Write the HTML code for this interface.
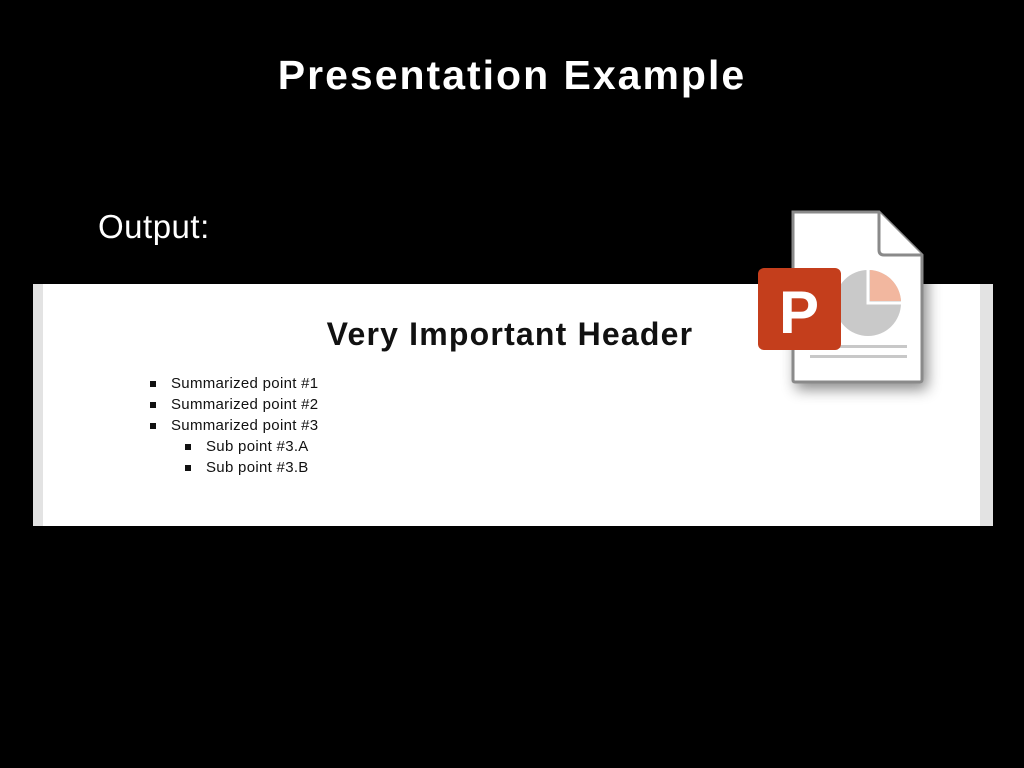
<!DOCTYPE html>
<html><head><meta charset="utf-8"><style>
html,body{margin:0;padding:0;background:#000;width:1024px;height:768px;overflow:hidden;position:relative;font-family:"Liberation Sans",sans-serif}
.t{position:absolute;top:52px;left:0;width:1024px;text-align:center;color:#fff;font-size:41px;font-weight:bold;letter-spacing:2px}
.o{position:absolute;left:98px;top:208px;color:#fff;font-size:33px;font-weight:300;letter-spacing:0.5px}
.panel{position:absolute;left:33px;top:284px;width:960px;height:242px;background:#fff}
.sl{position:absolute;left:0;top:0;width:10px;height:242px;background:#e3e3e3}
.sr{position:absolute;right:0;top:0;width:13px;height:242px;background:#e3e3e3}
.h{position:absolute;left:0;width:954px;top:32px;text-align:center;font-size:32px;font-weight:bold;color:#111;letter-spacing:1.2px}
ul{position:absolute;margin:0;padding:0;list-style:none;font-size:15px;color:#111;line-height:21px;letter-spacing:0.3px}
li{position:relative;padding-left:21px}
li:before{content:"";position:absolute;left:0;top:8px;width:6px;height:6px;background:#111}
</style></head><body>
<div class="t">Presentation Example</div>
<div class="o">Output:</div>
<div class="panel">
<div class="sl"></div><div class="sr"></div>
<div class="h">Very Important Header</div>
<ul style="left:117px;top:89px">
<li>Summarized point #1</li><li>Summarized point #2</li><li>Summarized point #3</li>
</ul>
<ul style="left:152px;top:152px">
<li>Sub point #3.A</li><li>Sub point #3.B</li>
</ul>
</div>
<svg style="position:absolute;left:740px;top:200px" width="260" height="210">
<defs><filter id="s" x="-30%" y="-30%" width="160%" height="160%"><feDropShadow dx="4" dy="6" stdDeviation="7" flood-opacity="0.45"/></filter></defs>
<path d="M53 12 H139 L182 55 V180 Q182 182 180 182 H55 Q53 182 53 180 Z" fill="#fff" stroke="#8a8a8a" stroke-width="3" filter="url(#s)"/>
<path d="M139 12 V50 Q139 55 144 55 H182" fill="#fff" stroke="#8a8a8a" stroke-width="3"/>
<circle cx="128" cy="103" r="33" fill="#c9c9c9"/>
<path d="M130 70 A33 33 0 0 1 161 101 H130 Z" fill="#f2b79f"/>
<path d="M128 66 V103 H165" fill="none" stroke="#fff" stroke-width="3"/>
<rect x="70" y="145" width="97" height="3" fill="#c8c8c8"/>
<rect x="70" y="155" width="97" height="3" fill="#c8c8c8"/>
<rect x="18" y="68" width="83" height="82" rx="6" fill="#c43e1c"/>
<text x="59" y="133" text-anchor="middle" font-family="Liberation Sans" font-weight="bold" font-size="60" fill="#fff">P</text>
</svg>
</body></html>
